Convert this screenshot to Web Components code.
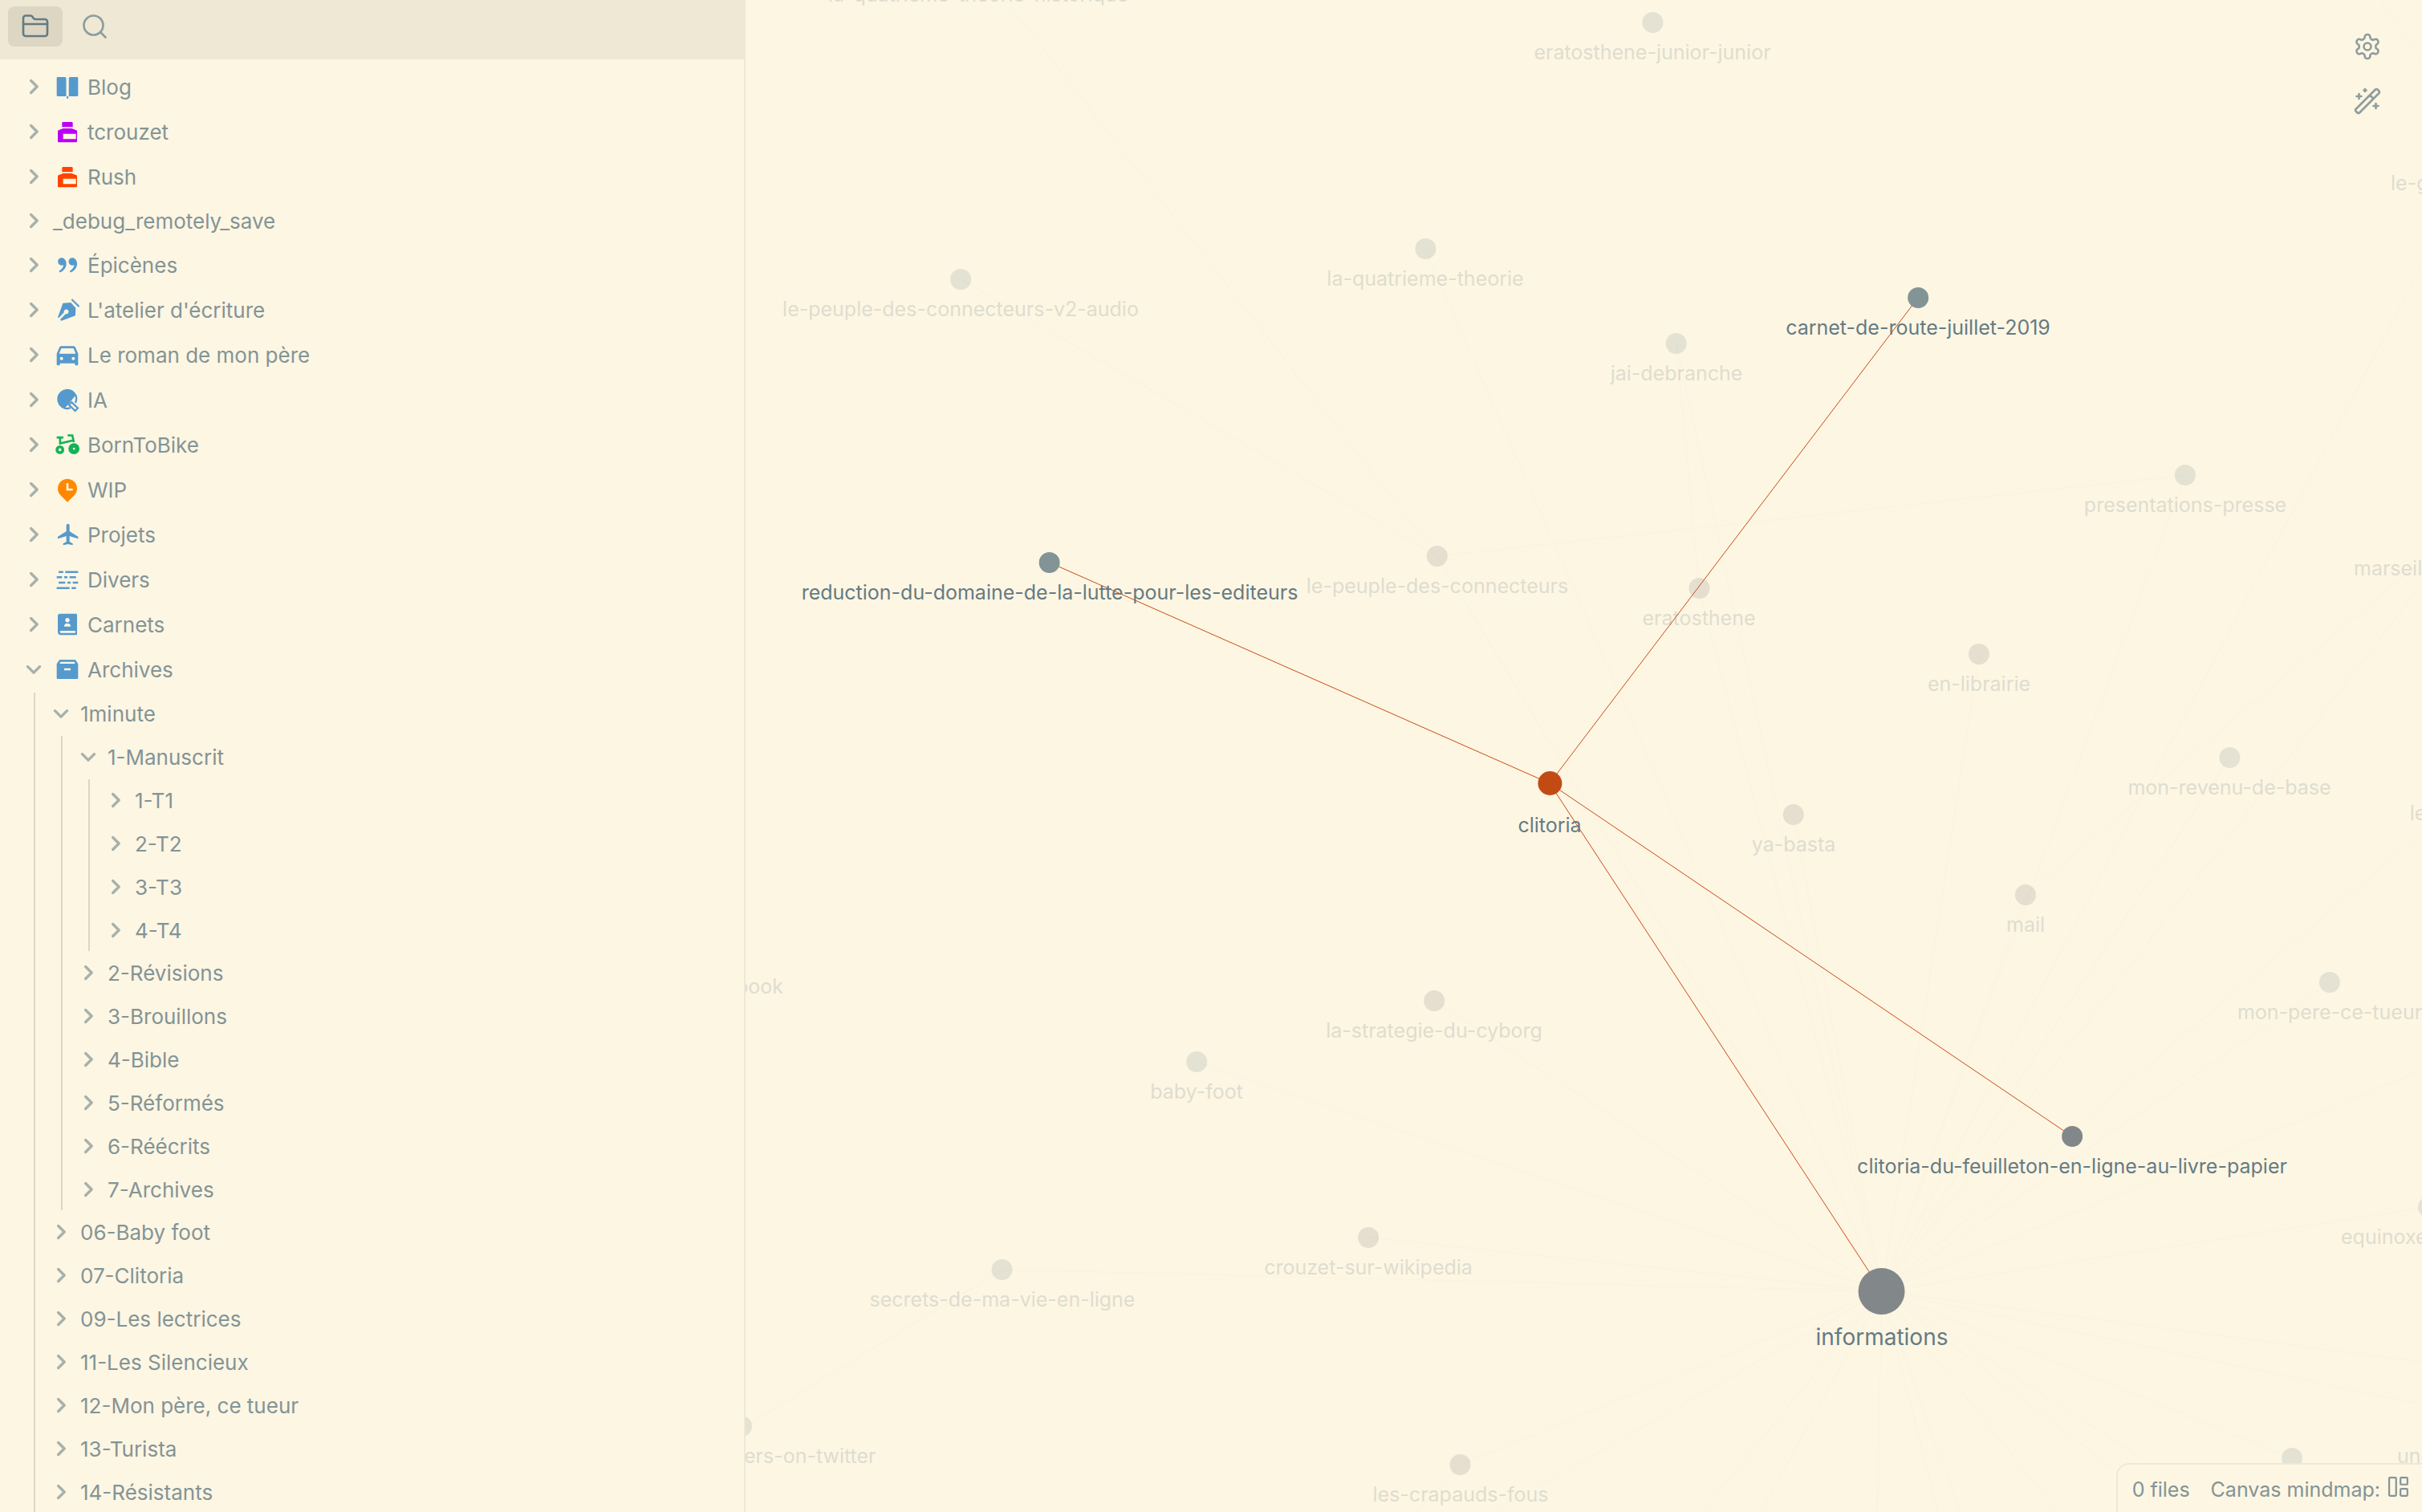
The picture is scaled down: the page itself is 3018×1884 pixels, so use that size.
<!DOCTYPE html>
<html lang="fr">
<head>
<meta charset="utf-8">
<title>Vault graph</title>
<style>
  html, body { height: 100%; }
  body {
    margin: 0;
    overflow: hidden;
    background: #fdf6e3;
    color: #839496;
    font-family: Inter, "Liberation Sans", sans-serif;
    font-size: 25px;
    --base: #fdf6e3;
    --border: #eee8d5;
    --guide: #ddd6c3;
    --muted: #839496;
    --strong: #657b83;
    --accent: #cb4b16;
    --blue: #569acd;
  }
</style>
</head>
<body>
<vault-app></vault-app>

<script>
const ICONS = {
  chevron: '<path d="M8 3l9 9-9 9" fill="none" stroke="currentColor" stroke-width="4" stroke-linecap="round" stroke-linejoin="round"/>',
  folder: '<g class="line"><path d="M20 20a2 2 0 0 0 2-2V8a2 2 0 0 0-2-2h-7.9a2 2 0 0 1-1.69-.9L9.6 3.9A2 2 0 0 0 7.93 3H4a2 2 0 0 0-2 2v13a2 2 0 0 0 2 2Z"/><path d="M2 10h20"/></g>',
  search: '<g class="line"><circle cx="11" cy="11" r="8"/><path d="m21 21-4.3-4.3"/></g>',
  settings: '<g class="line"><path d="M12.22 2h-.44a2 2 0 0 0-2 2v.18a2 2 0 0 1-1 1.73l-.43.25a2 2 0 0 1-2 0l-.15-.08a2 2 0 0 0-2.73.73l-.22.38a2 2 0 0 0 .73 2.73l.15.1a2 2 0 0 1 1 1.72v.51a2 2 0 0 1-1 1.74l-.15.09a2 2 0 0 0-.73 2.73l.22.38a2 2 0 0 0 2.73.73l.15-.08a2 2 0 0 1 2 0l.43.25a2 2 0 0 1 1 1.73V20a2 2 0 0 0 2 2h.44a2 2 0 0 0 2-2v-.18a2 2 0 0 1 1-1.73l.43-.25a2 2 0 0 1 2 0l.15.08a2 2 0 0 0 2.73-.73l.22-.39a2 2 0 0 0-.73-2.73l-.15-.08a2 2 0 0 1-1-1.74v-.5a2 2 0 0 1 1-1.74l.15-.09a2 2 0 0 0 .73-2.73l-.22-.38a2 2 0 0 0-2.73-.73l-.15.08a2 2 0 0 1-2 0l-.43-.25a2 2 0 0 1-1-1.73V4a2 2 0 0 0-2-2z"/><circle cx="12" cy="12" r="3"/></g>',
  wand: '<g class="line"><path d="m21.64 3.64-1.28-1.28a1.21 1.21 0 0 0-1.72 0L2.36 18.64a1.21 1.21 0 0 0 0 1.72l1.28 1.28a1.2 1.2 0 0 0 1.72 0L21.64 5.36a1.2 1.2 0 0 0 0-1.72M14 7l3 3M5 6v4M19 14v4M10 2v2M7 8H3M21 16h-4M11 3H9"/></g>',
  layout: '<g fill="none" stroke="currentColor" stroke-width="2"><rect x="1" y="1" width="8" height="21" rx="1"/><rect x="14" y="1" width="8" height="8" rx="1"/><rect x="14" y="14" width="8" height="8" rx="1"/></g>',
  book: '<path fill="currentColor" d="M3 3h6c.8 0 1.5.4 1.9 1V21H3a1 1 0 0 1-1-1V4a1 1 0 0 1 1-1zM21 3h-6c-.8 0-1.4.4-1.7 1V21H21a1 1 0 0 0 1-1V4a1 1 0 0 0-1-1zM11.3 21h1.6v2h-1.6z"/>',
  ink: '<path fill="currentColor" d="M16 9L20.371 10.749C20.751 10.9006 21 11.2685 21 11.6772V21C21 21.5523 20.5523 22 20 22H4C3.44772 22 3 21.5523 3 21V11.6772C3 11.2685 3.24895 10.9006 3.62861 10.749L8 9H16ZM20 14H8V19H20V14ZM16 3C16.5523 3 17 3.44772 17 4V7.6H7V4C7 3.44772 7.44772 3 8 3H16Z"/>',
  quotes: '<path fill="currentColor" d="M19.4167 6.6789C20.4469 7.7726 21 9 21 10.9897C21 14.4891 18.5436 17.6263 14.9695 19.1768L14.0768 17.7992C17.4121 15.9946 18.0639 13.6539 18.3245 12.178C17.7875 12.4557 17.0845 12.5533 16.3954 12.4895C14.591 12.3222 13.1689 10.8409 13.1689 9C13.1689 7.067 14.7359 5.5 16.6689 5.5C17.742 5.5 18.7681 5.9904 19.4167 6.6789ZM9.4167 6.6789C10.4469 7.7726 11 9 11 10.9897C11 14.4891 8.5436 17.6263 4.9695 19.1768L4.0768 17.7992C7.4121 15.9946 8.0639 13.6539 8.3245 12.178C7.7875 12.4557 7.0845 12.5533 6.3954 12.4895C4.591 12.3222 3.1689 10.8409 3.1689 9C3.1689 7.067 4.7359 5.5 6.6689 5.5C7.742 5.5 8.7681 5.9904 9.4167 6.6789Z"/>',
  nib: '<path fill="currentColor" fill-rule="evenodd" d="M7.8 5.8l7.4-.5 4.6 5-.4 7.2L6.4 22.4 5.2 21.2l5.1-5.3a2.2 2.2 0 1 0-1.5-1.5l-5 5.3L3 19.2z"/><path fill="none" stroke="currentColor" stroke-width="1.6" d="M16 2.3l6.9 6.7"/>',
  car: '<path fill="currentColor" d="M19 20H5V21C5 21.5523 4.5523 22 4 22H3C2.4477 22 2 21.5523 2 21V11L4.4805 5.2122C4.7957 4.4768 5.5187 4 6.3188 4H17.6812C18.4813 4 19.2043 4.4768 19.5195 5.2122L22 11V21C22 21.5523 21.5523 22 21 22H20C19.4477 22 19 21.5523 19 21V20ZM4.1759 11H19.8241L17.6812 6H6.3188L4.1759 11ZM6.5 17C7.3284 17 8 16.3284 8 15.5C8 14.6716 7.3284 14 6.5 14C5.6716 14 5 14.6716 5 15.5C5 16.3284 5.6716 17 6.5 17ZM17.5 17C18.3284 17 19 16.3284 19 15.5C19 14.6716 18.3284 14 17.5 14C16.6716 14 16 14.6716 16 15.5C16 16.3284 16.6716 17 17.5 17Z"/>',
  paddle: '<path fill="currentColor" d="M11.6 2a9.5 9.5 0 0 1 8.6 5.4L9.2 20.6A9.5 9.5 0 0 1 11.6 2z"/><path fill="none" stroke="currentColor" stroke-width="1.7" d="M19.6 7.5a8.6 8.6 0 0 1-.2 7.4M9 19.9a8.6 8.6 0 0 0 5.7-.3"/><path fill="none" stroke="currentColor" stroke-width="1.7" d="M15.9 14.3l5.8 5.6-2.5 2.6-5.8-5.7z"/>',
  bike: '<g fill="none" stroke="currentColor" stroke-width="2"><path d="M2 5.4h6.2M5.2 5.4v5.6L18 7.9M12.2 3.4h4.4l1.4 6.4"/><circle cx="5" cy="16.8" r="2.7" stroke-width="2.7"/><circle cx="18.1" cy="15.8" r="3.1" stroke-width="4.2"/></g>',
  pin: '<path fill="currentColor" d="M18.364 17.364L12 23.728L5.636 17.364a9 9 0 1 1 12.728 0ZM13 11V6h-2v7h6v-2z"/>',
  plane: '<path fill="currentColor" d="M14 8.9474L22 14V16L14 13.4737V18.8333L17 20.5V22L12.5 21L8 22V20.5L11 18.8333V13.4737L3 16V14L11 8.9474V3.5C11 2.6716 11.6716 2 12.5 2C13.3284 2 14 2.6716 14 3.5V8.9474Z"/>',
  dashes: '<path fill="none" stroke="currentColor" stroke-width="1.9" d="M3.8 5h4.3M10 5h12M2 10h5M9 10h3M14 10h6M3.8 15H10M12 15h3M17 15h5M2 20h12M16 20h4"/>',
  contacts: '<path fill="currentColor" fill-rule="evenodd" d="M20 2a1 1 0 0 1 1 1v18a1 1 0 0 1-1 1H6a3 3 0 0 1-3-3V4a2 2 0 0 1 2-2zM19.4 18H6a1 1 0 0 0 0 2h13.4zM12 6a2 2 0 1 0 0 4a2 2 0 0 0 0-4zM9 14h6a3 3 0 0 0-6 0z"/>',
  archive: '<path fill="currentColor" fill-rule="evenodd" d="M4.6 3h14.8L22 7v13a1 1 0 0 1-1 1H3a1 1 0 0 1-1-1V7zM5.6 5L4.8 6.8h14.4L18.4 5zM9 11v2h6v-2z"/>'
};

function define(name, template, setup) {
  const tpl = document.createElement('template');
  tpl.innerHTML = template;
  customElements.define(name, class extends HTMLElement {
    static get observedAttributes() { return ['name']; }
    constructor() {
      super();
      this.attachShadow({ mode: 'open' }).append(tpl.content.cloneNode(true));
    }
    connectedCallback() {
      if (setup) setup(this, this.shadowRoot);
    }
    attributeChangedCallback() {
      if (setup && this.isConnected) setup(this, this.shadowRoot);
    }
  });
}

define('ui-icon', `
  <style>
    :host { display: block; flex: none; width: var(--size, 36px); height: var(--size, 36px); }
    svg { display: block; width: 100%; height: 100%; overflow: visible; }
    .line { fill: none; stroke: currentColor; stroke-width: 1.75; stroke-linecap: round; stroke-linejoin: round; }
  </style>
  <svg viewBox="0 0 24 24" aria-hidden="true"></svg>`,
  (host, root) => { root.querySelector('svg').innerHTML = ICONS[host.getAttribute('name')] || ''; });

define('icon-button', `
  <style>
    :host { display: block; }
    button { display: flex; align-items: center; justify-content: center; width: 68px; height: 50px; margin: 0; padding: 0; border: 0; border-radius: 8px; background: none; color: var(--muted); cursor: pointer; opacity: .9; }
    :host([active]) button { background: var(--guide); color: var(--strong); opacity: 1; }
  </style>
  <button type="button"><ui-icon></ui-icon></button>`,
  (host, root) => {
    root.querySelector('ui-icon').setAttribute('name', host.getAttribute('icon'));
    root.querySelector('button').setAttribute('aria-label', host.getAttribute('label'));
  });

define('tree-item', `
  <style>
    :host { display: block; margin-bottom: 2px; }
    :host([open]) { margin-bottom: 1px; }
    :host(:last-child) { margin-bottom: 0; }
    button { display: flex; align-items: center; width: 100%; height: 52px; margin: 0; padding: 0 16px; border: 0; background: none; color: inherit; font: inherit; font-size: 26px; text-align: left; white-space: nowrap; cursor: pointer; }
    :host([icon]) button { height: 54px; }
    .chevron { --size: 20px; margin-right: 14px; color: var(--muted); opacity: .7; }
    :host([open]) .chevron { transform: rotate(90deg); }
    .icon { --size: 32px; display: none; margin: 0 9px 0 2px; color: var(--tint, var(--blue)); }
    :host([icon]) .icon { display: block; }
    .group { display: none; margin: 2px 0 0 26px; padding-left: 6px; border-left: 2px solid var(--guide); }
    :host([open]) .group { display: block; }
  </style>
  <button type="button"><ui-icon class="chevron" name="chevron"></ui-icon><ui-icon class="icon"></ui-icon><span></span></button>
  <div class="group" role="group"><slot></slot></div>`,
  (host, root) => {
    root.querySelector('span').textContent = host.getAttribute('label');
    root.querySelector('button').setAttribute('aria-expanded', host.hasAttribute('open'));
    if (host.hasAttribute('icon')) root.querySelector('.icon').setAttribute('name', host.getAttribute('icon'));
    if (host.hasAttribute('tint')) host.style.setProperty('--tint', host.getAttribute('tint'));
  });

define('side-bar', `
  <style>
    :host { display: flex; flex-direction: column; flex: none; box-sizing: border-box; width: 929px; border-right: 2px solid var(--border); overflow: hidden; }
    header { display: flex; flex: none; gap: 6px; padding: 8px 10px 16px; background: var(--border); }
    nav { flex: 1; min-height: 0; padding: 7px 16px 0; overflow: hidden; }
  </style>
  <header><slot name="tabs"></slot></header>
  <nav aria-label="Files"><slot></slot></nav>`);

define('graph-node', `
  <style>
    :host { position: absolute; left: calc(var(--x) * 1px); top: calc((var(--y) - var(--r)) * 1px); --r: 13; --dot: #839496; transform: translateX(-50%); opacity: .2; }
    :host([kind="tag"]) { --dot: #8c8084; }
    :host([lit]) { opacity: 1; }
    :host([lit][kind="tag"]) { --dot: #828889; }
    :host([size="focus"]) { --r: 15; --dot: #c24b14; --gap: 21px; }
    :host([size="hub"]) { --r: 29; --text: 28px; --gap: 12px; }
    :host([edge]) { transform: none; }
    button { display: flex; flex-direction: column; align-items: center; gap: var(--gap, 8px); margin: 0; padding: 0; border: 0; background: none; color: var(--strong); font: inherit; font-size: var(--text, 25px); line-height: 32px; white-space: nowrap; cursor: pointer; }
    i { width: calc(var(--r) * 2px); height: calc(var(--r) * 2px); border-radius: 50%; background: var(--dot); }
    :host([edge]) i { visibility: hidden; }
  </style>
  <button type="button"><i></i><slot></slot></button>`,
  (host) => {
    host.style.setProperty('--x', host.getAttribute('x'));
    host.style.setProperty('--y', host.getAttribute('y'));
  });

define('graph-view', `
  <style>
    :host { display: block; position: relative; flex: 1; min-width: 0; overflow: hidden; }
    svg { display: block; width: 100%; height: 100%; }
    path { fill: none; }
    .faint { stroke: #fbf4e1; stroke-width: 2; }
    .lit { stroke: var(--accent); stroke-width: 1; }
    .controls { position: absolute; top: 33px; right: 34px; display: flex; flex-direction: column; gap: 18px; }
  </style>
  <svg aria-hidden="true">
    <path class="faint"/>
    <path class="lit"/>
  </svg>
  <slot></slot>
  <div class="controls"><slot name="controls"></slot></div>`,
  (host, root) => {
    const hub = [1416, 680];
    const rays = [[862,-236],[847,-618],[1160,-501],[1188,-196],[1306,86],[1537,-114],[1794,-337],[1595,186],[2121,-659],[1849,15],[2089,-202],
      [2089,109],[1974,295],[2089,405],[2097,575],[2089,768],[2089,821],[1927,888],[1748,893],[1775,955],[1635,955],[1513,955],[1486,955],
      [1410,955],[1265,955],[1192,955],[891,896],[931,955],[320,653],[776,613],[562,394],[858,318]];
    const links = [[268,-581,862,-236],[290,-973,862,-236],[1794,-337,862,-236],[1160,-501,1188,-196],
      [1595,186,2121,-258],[2038,-929,2089,-852],[320,653,0,848],[891,896,836,955]];
    const dy = 929;
    const line = (a, b, c, d) => 'M' + a + ' ' + (b + dy) + 'L' + c + ' ' + (d + dy);
    root.querySelector('.faint').setAttribute('d',
      rays.map(([x, y]) => line(hub[0], hub[1], x, y)).join('') + links.map(l => line(...l)).join(''));
    root.querySelector('.lit').setAttribute('d',
      [[1461, 371], [379, 701], [1653, 1416], [1416, 1609]].map(([x, y]) => 'M1002 976L' + x + ' ' + y).join(''));
  });

define('status-bar', `
  <style>
    :host { position: absolute; right: 0; bottom: 0; display: flex; align-items: center; gap: 26px; box-sizing: border-box; height: 61px; padding: 2px 16px 0 18px; border: 2px solid var(--border); border-width: 2px 0 0 2px; border-radius: 16px 0 0; background: var(--base); line-height: 32px; white-space: nowrap; }
  </style>
  <slot></slot>`);

define('vault-app', `
  <style>
    :host { display: flex; position: relative; height: 100vh; overflow: hidden; }
    .mode { display: flex; align-items: center; gap: 10px; }
    .mode ui-icon { --size: 26px; align-self: flex-start; }
  </style>
  <side-bar>
    <icon-button slot="tabs" icon="folder" label="Files" active></icon-button>
    <icon-button slot="tabs" icon="search" label="Search"></icon-button>
    <tree-item label="Blog" icon="book"></tree-item>
    <tree-item label="tcrouzet" icon="ink" tint="#bb00f5"></tree-item>
    <tree-item label="Rush" icon="ink" tint="#ff4400"></tree-item>
    <tree-item label="_debug_remotely_save"></tree-item>
    <tree-item label="Épicènes" icon="quotes"></tree-item>
    <tree-item label="L'atelier d'écriture" icon="nib"></tree-item>
    <tree-item label="Le roman de mon père" icon="car"></tree-item>
    <tree-item label="IA" icon="paddle"></tree-item>
    <tree-item label="BornToBike" icon="bike" tint="#12b357"></tree-item>
    <tree-item label="WIP" icon="pin" tint="#ff8800"></tree-item>
    <tree-item label="Projets" icon="plane"></tree-item>
    <tree-item label="Divers" icon="dashes"></tree-item>
    <tree-item label="Carnets" icon="contacts"></tree-item>
    <tree-item label="Archives" icon="archive" open>
      <tree-item label="1minute" open>
        <tree-item label="1-Manuscrit" open>
          <tree-item label="1-T1"></tree-item>
          <tree-item label="2-T2"></tree-item>
          <tree-item label="3-T3"></tree-item>
          <tree-item label="4-T4"></tree-item>
        </tree-item>
        <tree-item label="2-Révisions"></tree-item>
        <tree-item label="3-Brouillons"></tree-item>
        <tree-item label="4-Bible"></tree-item>
        <tree-item label="5-Réformés"></tree-item>
        <tree-item label="6-Réécrits"></tree-item>
        <tree-item label="7-Archives"></tree-item>
      </tree-item>
      <tree-item label="06-Baby foot"></tree-item>
      <tree-item label="07-Clitoria"></tree-item>
      <tree-item label="09-Les lectrices"></tree-item>
      <tree-item label="11-Les Silencieux"></tree-item>
      <tree-item label="12-Mon père, ce tueur"></tree-item>
      <tree-item label="13-Turista"></tree-item>
      <tree-item label="14-Résistants"></tree-item>
    </tree-item>
  </side-bar>
  <graph-view>
    <graph-node x="290" y="-44">la-quatrieme-theorie-historique</graph-node>
    <graph-node x="1130" y="28">eratosthene-junior-junior</graph-node>
    <graph-node x="847" y="310">la-quatrieme-theorie</graph-node>
    <graph-node x="268" y="348">le-peuple-des-connecteurs-v2-audio</graph-node>
    <graph-node x="1160" y="428">jai-debranche</graph-node>
    <graph-node x="1461" y="371" lit>carnet-de-route-juillet-2019</graph-node>
    <graph-node x="1794" y="592">presentations-presse</graph-node>
    <graph-node x="379" y="701" lit>reduction-du-domaine-de-la-lutte-pour-les-editeurs</graph-node>
    <graph-node x="862" y="693" kind="tag">le-peuple-des-connecteurs</graph-node>
    <graph-node x="1188" y="733" kind="tag">eratosthene</graph-node>
    <graph-node x="1537" y="815" kind="tag">en-librairie</graph-node>
    <graph-node x="1002" y="976" lit size="focus">clitoria</graph-node>
    <graph-node x="1849" y="944">mon-revenu-de-base</graph-node>
    <graph-node x="1306" y="1015" kind="tag">ya-basta</graph-node>
    <graph-node x="1595" y="1115" kind="tag">mail</graph-node>
    <graph-node x="1974" y="1224">mon-pere-ce-tueur</graph-node>
    <graph-node x="858" y="1247" kind="tag">la-strategie-du-cyborg</graph-node>
    <graph-node x="562" y="1323">baby-foot</graph-node>
    <graph-node x="1653" y="1416" lit kind="tag">clitoria-du-feuilleton-en-ligne-au-livre-papier</graph-node>
    <graph-node x="776" y="1542" kind="tag">crouzet-sur-wikipedia</graph-node>
    <graph-node x="320" y="1582">secrets-de-ma-vie-en-ligne</graph-node>
    <graph-node x="1416" y="1609" lit kind="tag" size="hub">informations</graph-node>
    <graph-node x="891" y="1825" kind="tag">les-crapauds-fous</graph-node>
    <graph-node x="1927" y="1817"></graph-node>
    <graph-node x="2097" y="1504"></graph-node>
    <graph-node x="-5" y="1777"></graph-node>
    <graph-node x="2050" y="191" edge>le-g</graph-node>
    <graph-node x="2004" y="671" edge>marseille</graph-node>
    <graph-node x="2071" y="976" edge>le</graph-node>
    <graph-node x="1988" y="1504" edge>equinoxe</graph-node>
    <graph-node x="2058" y="1777" edge>und</graph-node>
    <graph-node x="-12" y="1192" edge>book</graph-node>
    <graph-node x="-2" y="1777" edge>ers-on-twitter</graph-node>
    <icon-button slot="controls" icon="settings" label="Open graph settings"></icon-button>
    <icon-button slot="controls" icon="wand" label="Start timelapse animation"></icon-button>
  </graph-view>
  <status-bar>
    <span>0 files</span>
    <span class="mode">Canvas mindmap: <ui-icon name="layout"></ui-icon></span>
  </status-bar>`);
</script>
</body>
</html>
